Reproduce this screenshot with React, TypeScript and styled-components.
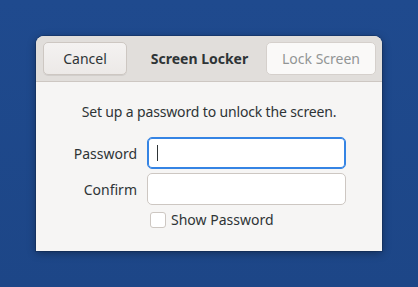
import styled, { createGlobalStyle } from 'styled-components';

const Global = createGlobalStyle`
  html, body {
    margin: 0;
    padding: 0;
    background: #1d4688;
  }
  body {
    font-family: 'Noto Sans', 'Open Sans', sans-serif;
  }
`;

const Desktop = styled.div`
  width: 418px;
  height: 287px;
  background: linear-gradient(180deg, #1f4a8e 0%, #1d4687 100%);
  padding: 36px 0 0 36px;
  box-sizing: border-box;
`;

const Window = styled.div`
  width: 346px;
  height: 215px;
  display: flex;
  flex-direction: column;
  background: #f6f5f4;
  border-radius: 8px 8px 0 0;
  box-shadow: 0 2px 8px rgba(0, 0, 0, 0.35), 0 0 0 1px rgba(0, 0, 0, 0.15);
  overflow: hidden;
`;

const HeaderBar = styled.div`
  height: 46px;
  display: flex;
  align-items: center;
  justify-content: space-between;
  padding: 0 6px 0 7px;
  background: #e1dedb;
  border-bottom: 1px solid #cdc7c2;
  box-sizing: border-box;
`;

const Button = styled.div<{ disabled?: boolean; width: number }>`
  width: ${(p) => p.width}px;
  height: 33px;
  padding: 0 8px;
  display: flex;
  align-items: center;
  justify-content: center;
  box-sizing: border-box;
  white-space: nowrap;
  border: 1px solid ${(p) => (p.disabled ? '#d5d0cc' : '#cdc7c2')};
  border-radius: 5px;
  background: ${(p) => (p.disabled ? '#faf9f8' : 'linear-gradient(180deg, #f4f2f1 0%, #ece9e7 100%)')};
  color: ${(p) => (p.disabled ? '#929595' : '#2e3436')};
  font-size: 14px;
  box-shadow: ${(p) => (p.disabled ? 'none' : '0 1px 0 rgba(0,0,0,0.07)')};
`;

const Title = styled.div`
  font-weight: 700;
  font-size: 14px;
  color: #2e3436;
  margin-left: 6px;
`;

const Body = styled.div`
  flex: 1;
  display: flex;
  flex-direction: column;
  align-items: center;
  padding-top: 20px;
`;

const Message = styled.div`
  font-size: 14px;
  letter-spacing: -0.15px;
  color: #2e3436;
  margin-bottom: 16px;
`;

const Form = styled.div`
  display: grid;
  grid-template-columns: 65px 199px;
  column-gap: 10px;
  row-gap: 4px;
  align-items: center;
`;

const Label = styled.div`
  text-align: right;
  font-size: 14px;
  color: #2e3436;
`;

const Entry = styled.div<{ focused?: boolean }>`
  position: relative;
  height: 32px;
  box-sizing: border-box;
  background: #ffffff;
  border: 1px solid ${(p) => (p.focused ? '#3584e4' : '#cdc7c2')};
  box-shadow: ${(p) => (p.focused ? 'inset 0 0 0 1px #3584e4' : 'none')};
  border-radius: 5px;
`;

const Caret = styled.div`
  position: absolute;
  left: 9px;
  top: 7px;
  width: 1px;
  height: 16px;
  background: #2e3436;
`;

const CheckRow = styled.label`
  grid-column: 2;
  display: flex;
  align-items: center;
  gap: 5px;
  padding-left: 3px;
  margin-top: 1px;
  font-size: 14px;
  color: #2e3436;
`;

const CheckBox = styled.span`
  width: 14px;
  height: 14px;
  border: 1px solid #cdc7c2;
  border-radius: 3px;
  background: #ffffff;
`;

const App = () => {
  return (
    <Desktop>
      <Global />
      <Window>
        <HeaderBar>
          <Button width={84}>Cancel</Button>
          <Title>Screen Locker</Title>
          <Button disabled width={110}>
            Lock Screen
          </Button>
        </HeaderBar>
        <Body>
          <Message>Set up a password to unlock the screen.</Message>
          <Form>
            <Label>Password</Label>
            <Entry focused>
              <Caret />
            </Entry>
            <Label>Confirm</Label>
            <Entry />
            <CheckRow>
              <CheckBox />
              Show Password
            </CheckRow>
          </Form>
        </Body>
      </Window>
    </Desktop>
  );
};

export default App;
